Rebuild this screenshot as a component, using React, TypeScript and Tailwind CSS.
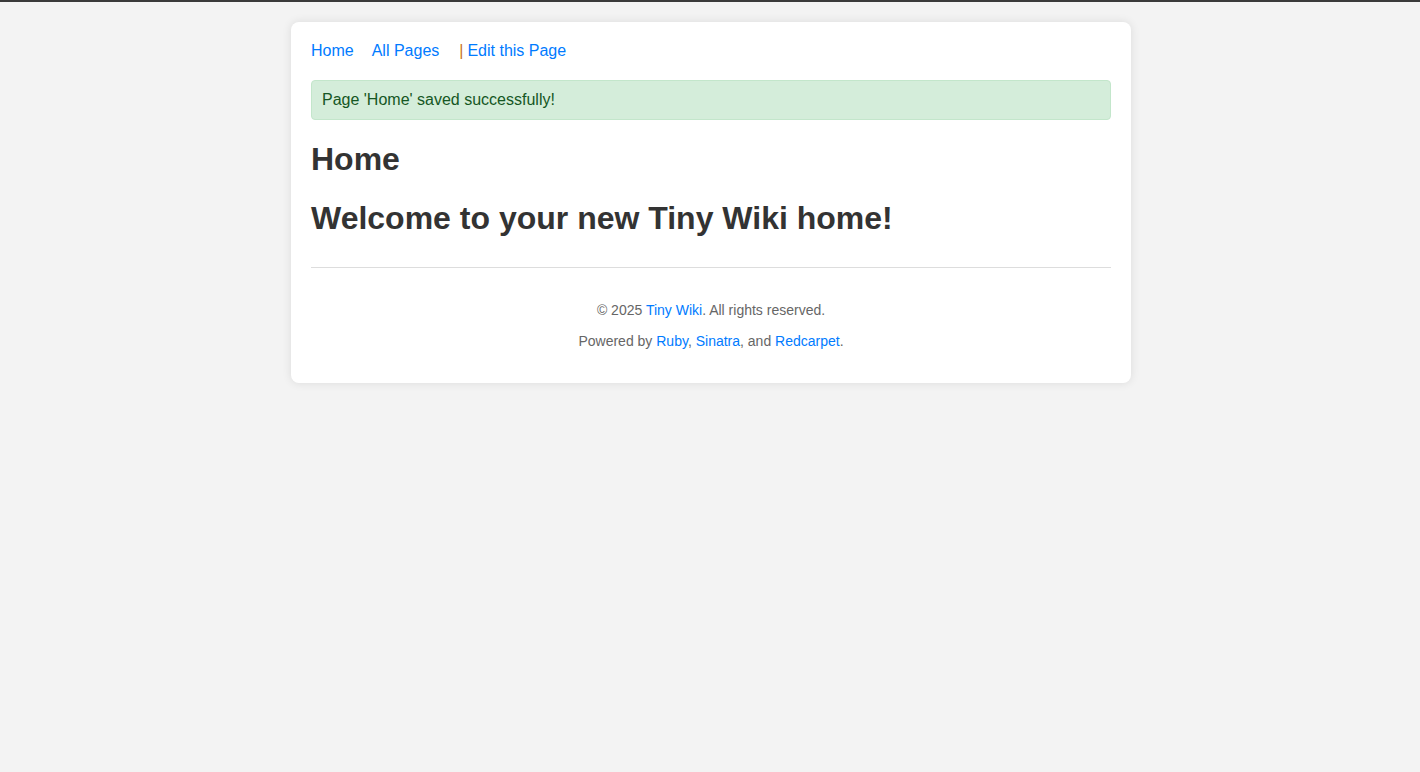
import React from "react";

export default function App() {
  return (
    <div className="min-h-screen bg-[#f3f3f3] pl-[2px] text-[#333] [font-family:'Liberation_Sans',Arial,sans-serif]">
      <div className="-ml-[2px] h-[2px] bg-[#3a3a3a]" />
      <div className="mx-auto mt-[20px] w-[840px] rounded-[8px] bg-white p-[20px] shadow-[0_0_10px_rgba(0,0,0,0.1)]">
        <nav className="flex items-center text-[16px] leading-[18px]">
          <a className="text-[#007bff] mr-[18px]" href="#">Home</a>
          <a className="text-[#007bff] mr-[20px]" href="#">All Pages</a>
          <span className="text-[#c8731a] mr-[4px]">|</span>
          <a className="text-[#007bff]" href="#">Edit this Page</a>
        </nav>
        <div className="mt-[20px] rounded-[4px] border border-[#c3e6cb] bg-[#d4edda] px-[10px] py-[10px] text-[16px] leading-[18px] text-[#155724]">
          Page 'Home' saved successfully!
        </div>
        <h1 className="mt-[21px] text-[32px] font-bold leading-[37px]">Home</h1>
        <h1 className="mt-[22px] text-[32px] font-bold leading-[37px]">Welcome to your new Tiny Wiki home!</h1>
        <footer className="mt-[30px] border-t border-[#ddd] pt-[20px] text-center text-[14px] leading-[16px] text-[#666]">
          <p className="my-[14px]">
            © 2025 <a className="text-[#007bff]" href="#">Tiny Wiki</a>. All rights reserved.
          </p>
          <p className="mt-[15px] mb-[14px]">
            Powered by <a className="text-[#007bff]" href="#">Ruby</a>,{" "}
            <a className="text-[#007bff]" href="#">Sinatra</a>, and{" "}
            <a className="text-[#007bff]" href="#">Redcarpet</a>.
          </p>
        </footer>
      </div>
    </div>
  );
}
